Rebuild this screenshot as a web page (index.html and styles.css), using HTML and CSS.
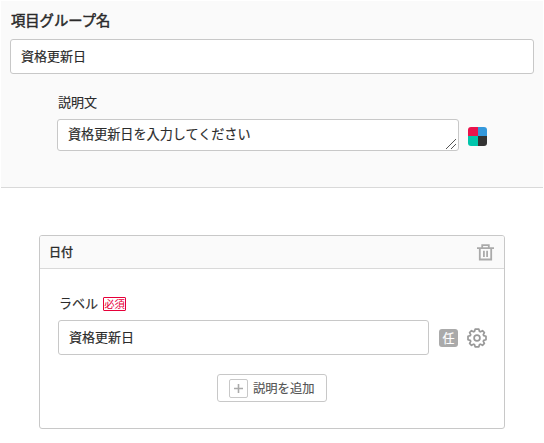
FILE: index.html
```html
<!DOCTYPE html>
<html lang="ja">
<head>
<meta charset="utf-8">
<title>項目グループ</title>
<link rel="stylesheet" href="styles.css">
</head>
<body>
<section class="group">
  <h1 class="group-title">項目グループ名</h1>
  <div class="field">資格更新日</div>
  <div class="description">
    <div class="label">説明文</div>
    <div class="row">
      <div class="field area">資格更新日を入力してください
        <svg class="grip" width="12" height="12" viewBox="0 0 12 12"><path d="M1 11 11 1M6 11 11 6"/></svg>
      </div>
      <div class="palette"><i class="red"></i><i class="blue"></i><i class="green"></i><i class="dark"></i></div>
    </div>
  </div>
</section>
<section class="card">
  <header class="card-head">
    <h2 class="card-title">日付</h2>
    <svg class="trash" width="17" height="17" viewBox="0 0 17 17"><path d="M0 4.2h17M5.2 4V1.2h6.6V4M2.8 4.5v11h11.4v-11M6.9 6.7v6.2M10.1 6.7v6.2"/></svg>
  </header>
  <div class="card-body">
    <div class="label">ラベル<span class="required">必須</span></div>
    <div class="row">
      <div class="field">資格更新日</div>
      <span class="optional">任</span>
      <svg class="gear" width="20" height="20" viewBox="0 0 20 20"><path d="M8.15 1.2h3.7l.65 2.2 1 .4 2-1.1 1.9 1.9-1.1 2 .4 1 2.3.6v3.6l-2.3.6-.4 1 1.1 2-1.9 1.9-2-1.1-1 .4-.65 2.2h-3.7l-.65-2.2-1-.4-2 1.1-1.9-1.9 1.1-2-.4-1L1 11.800V8.200l2.300-.6.4-1-1.100-2 1.900-1.900 2 1.100 1-.4z"/><circle cx="10" cy="10" r="2.900"/></svg>
    </div>
    <button class="add" type="button"><span class="plus"><svg width="11" height="11" viewBox="0 0 11 11"><path d="M5.500 1v9M1 5.500h9"/></svg></span>説明を追加</button>
  </div>
</section>
</body>
</html>
```
FILE: styles.css
```css
* { box-sizing: border-box; }
body {
  margin: 0;
  padding: 1px;
  background: #fff;
  color: #2b2b2b;
  font: 13px/20px "Noto Sans CJK JP", sans-serif;
  -webkit-text-stroke: 0.15px;
}
svg { display: block; fill: none; }
.group {
  height: 187px;
  padding: 9px 9px 0;
  background: #fafafa;
  border-bottom: 1px solid #d9d9d9;
}
.group-title {
  margin: 0 0 9px;
  padding-left: 1px;
  font-size: 14.300px;
  line-height: 20px;
  font-weight: 400;
  -webkit-text-stroke: 0.5px;
}
.field {
  height: 35px;
  padding: 0 10px;
  background: #fff;
  border: 1px solid #c8c8c8;
  border-radius: 3px;
  line-height: 32px;
}
.description { padding: 18px 0 0 47px; }
.label { height: 20px; display: flex; align-items: center; padding-left: 1px; }
.row { display: flex; align-items: center; }
.description .row { margin-top: 7px; }
.area { position: relative; width: 402px; height: 32px; line-height: 28px; font-size: 13.100px; }
.grip { position: absolute; right: 1px; bottom: 0; stroke: #555; stroke-width: 1; }
.palette {
  display: grid;
  grid-template-columns: 9.500px 9.500px;
  grid-template-rows: 9.500px 9.500px;
  margin: 2px 0 0 9px;
  border-radius: 3px;
  overflow: hidden;
}
.red { background: #e9134c; }
.blue { background: #3498db; }
.green { background: #00c5ab; }
.dark { background: #333; }
.card {
  width: 466px;
  height: 194px;
  margin: 47px 0 0 38px;
  border: 1px solid #c8c8c8;
  border-radius: 3px;
  overflow: hidden;
}
.card-head {
  display: flex;
  align-items: center;
  justify-content: space-between;
  height: 33px;
  padding: 0 10px 0 9px;
  background: #fafafa;
  border-bottom: 1px solid #d9d9d9;
}
.card-title { margin: 0; font-size: 12px; font-weight: 400; -webkit-text-stroke: 0.4px; }
.trash { stroke: #aaa; stroke-width: 1.800; }
.card-body { display: flex; flex-direction: column; padding: 24px 17px 0 18px; }
.card-body .row { margin-top: 7px; }
.card-body .field { width: 371px; }
.required {
  width: 23px;
  height: 14px;
  margin: 2px 0 0 5px;
  border: 1px solid #e60039;
  border-radius: 1px;
  color: #e60039;
  font-size: 10.400px;
  line-height: 12px;
  text-align: center;
  -webkit-text-stroke: 0;
}
.optional {
  width: 19px;
  height: 18px;
  margin-left: 10px;
  border-radius: 3px;
  background: #aaa;
  color: #fff;
  font-size: 12px;
  line-height: 17px;
  text-align: center;
}
.gear { margin-left: 9px; stroke: #999; stroke-width: 1.700; stroke-linejoin: round; }
.add {
  display: flex;
  align-items: center;
  align-self: flex-start;
  width: 110px;
  height: 28px;
  margin: 19px 0 0 159px;
  padding: 0 0 0 11px;
  background: #fff;
  border: 1px solid #c8c8c8;
  border-radius: 3px;
  color: #555;
  font: 12.300px/20px "Noto Sans CJK JP", sans-serif;
  -webkit-text-stroke: 0.15px;
}
.plus {
  display: grid;
  place-items: center;
  width: 19px;
  height: 19px;
  margin-right: 5px;
  border: 1px solid #c8c8c8;
  border-radius: 2px;
}
.plus svg { stroke: #aaa; stroke-width: 1.600; }
```
